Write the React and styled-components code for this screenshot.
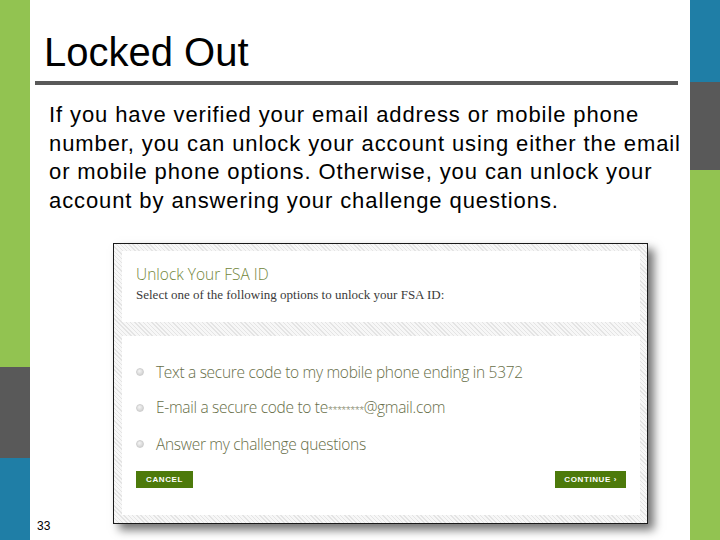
import React from "react";
import styled, { createGlobalStyle } from "styled-components";

const GlobalStyle = createGlobalStyle`
  html, body {
    margin: 0;
    padding: 0;
    background: #fff;
  }
  body {
    font-family: "Liberation Sans", Arial, sans-serif;
  }
`;

const Slide = styled.div`
  width: 720px;
  height: 540px;
  display: flex;
  flex-direction: row;
  overflow: hidden;
  background: #fff;
`;

const SideBar = styled.div`
  width: 30px;
  flex-shrink: 0;
  display: flex;
  flex-direction: column;
`;

const Segment = styled.div`
  height: ${(p) => (p.$grow ? "auto" : `${p.$h}px`)};
  flex: ${(p) => (p.$grow ? 1 : "none")};
  background: ${(p) => p.$color};
`;

const Main = styled.div`
  flex: 1;
  display: flex;
  flex-direction: column;
  padding: 0 4px 0 5px;
`;

const Title = styled.h1`
  margin: 0;
  padding: 29px 0 0 9px;
  font-size: 40px;
  font-weight: normal;
  line-height: 46px;
  color: #000;
`;

const Rule = styled.div`
  height: 4px;
  background: #595959;
  margin: 6px 8px 0 0;
`;

const Body = styled.p`
  margin: 16px 0 0 14px;
  font-size: 22px;
  line-height: 28.6px;
  letter-spacing: 0.9px;
  color: #000;
`;

const Bottom = styled.div`
  flex: 1;
  display: flex;
  flex-direction: row;
  align-items: flex-start;
  margin-top: 28px;
`;

const PageNum = styled.span`
  align-self: flex-end;
  width: 76px;
  padding-left: 2px;
  margin-bottom: 7px;
  font-size: 12px;
  line-height: 14px;
  color: #000;
`;

const Frame = styled.div`
  width: 518px;
  height: 264px;
  border: 1px solid #1a1a1a;
  padding: 7px 7px 8px 8px;
  display: flex;
  flex-direction: column;
  gap: 14px;
  background: repeating-linear-gradient(
    45deg,
    #e4e4e4 0px,
    #e4e4e4 1px,
    #f7f7f7 1px,
    #f7f7f7 3px
  );
  box-shadow: 6px 6px 9px rgba(0, 0, 0, 0.55);
`;

const Panel = styled.div`
  background: #fff;
  padding: ${(p) => p.$pad};
  height: ${(p) => p.$h}px;
  box-sizing: border-box;
  display: flex;
  flex-direction: column;
`;

const PanelTitle = styled.div`
  font-family: "Open Sans", "Liberation Sans", sans-serif;
  font-weight: 300;
  font-size: 15.5px;
  color: #72863a;
  line-height: 20px;
`;

const PanelSub = styled.div`
  font-family: "Liberation Serif", "DejaVu Serif", serif;
  font-size: 13px;
  color: #3a3a3a;
  margin-top: 3px;
`;

const Options = styled.div`
  display: flex;
  flex-direction: column;
  gap: 14px;
`;

const Option = styled.label`
  display: flex;
  flex-direction: row;
  align-items: center;
  gap: 12px;
  height: 22px;
  font-family: "Open Sans", "Liberation Sans", sans-serif;
  font-weight: 300;
  font-size: 15.5px;
  line-height: 22px;
  color: #676e48;
  letter-spacing: -0.3px;
`;

const Radio = styled.span`
  width: 8px;
  height: 8px;
  border-radius: 50%;
  background: radial-gradient(circle at 40% 35%, #f4f4f4, #c9c9c9);
  border: 1px solid #cfcfcf;
  box-sizing: border-box;
`;

const Stars = styled.span`
  font-size: 9px;
  letter-spacing: -0.5px;
`;

const Actions = styled.div`
  display: flex;
  flex-direction: row;
  justify-content: space-between;
  margin-top: 16px;
`;

const GreenButton = styled.button`
  background: #4d7a0b;
  color: #fff;
  border: none;
  height: 17px;
  padding: 0 ${(p) => p.$px}px;
  font-family: "Liberation Sans", Arial, sans-serif;
  font-weight: bold;
  font-size: 8px;
  letter-spacing: 0.6px;
  display: flex;
  align-items: center;
`;

const options = [
  "Text a secure code to my mobile phone ending in 5372",
  "email",
  "Answer my challenge questions",
];

export default function App() {
  return (
    <>
      <GlobalStyle />
      <Slide>
        <SideBar>
          <Segment $h={367} $color="#92c351" />
          <Segment $h={91} $color="#595959" />
          <Segment $grow $color="#1f7ea6" />
        </SideBar>
        <Main>
          <Title>Locked Out</Title>
          <Rule />
          <Body>
            If you have verified your email address or mobile phone number,
            you can unlock your account using either the email or mobile phone
            options. Otherwise, you can unlock your account by answering your
            challenge questions.
          </Body>
          <Bottom>
            <PageNum>33</PageNum>
            <Frame>
              <Panel $h={71} $pad="13px 14px 0">
                <PanelTitle>Unlock Your FSA ID</PanelTitle>
                <PanelSub>
                  Select one of the following options to unlock your FSA ID:
                </PanelSub>
              </Panel>
              <Panel $h={179} $pad="25px 14px 0">
                <Options>
                  {options.map((o) => (
                    <Option key={o}>
                      <Radio />
                      {o === "email" ? (
                        <span>
                          E-mail a secure code to te<Stars>********</Stars>
                          @gmail.com
                        </span>
                      ) : (
                        o
                      )}
                    </Option>
                  ))}
                </Options>
                <Actions>
                  <GreenButton $px={10}>CANCEL</GreenButton>
                  <GreenButton $px={9}>CONTINUE ›</GreenButton>
                </Actions>
              </Panel>
            </Frame>
          </Bottom>
        </Main>
        <SideBar>
          <Segment $h={82} $color="#1f7ea6" />
          <Segment $h={88} $color="#595959" />
          <Segment $grow $color="#92c351" />
        </SideBar>
      </Slide>
    </>
  );
}
